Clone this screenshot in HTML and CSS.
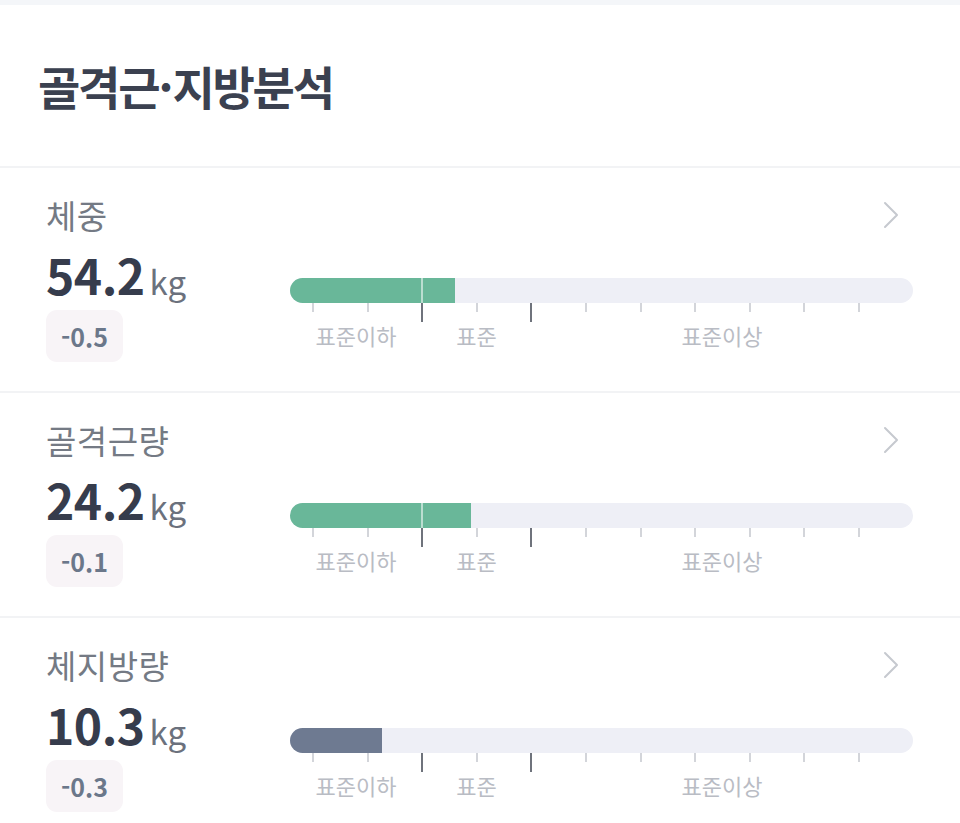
FILE: index.html
```html
<!DOCTYPE html>
<html lang="ko">
<head>
<meta charset="utf-8">
<title>골격근·지방분석</title>
<link rel="stylesheet" href="styles.css">
</head>
<body>
<div class="top-strip"></div>
<header class="header">
  <h1 class="title">골격근<span class="dot">·</span>지방분석</h1>
</header>

<section class="item">
  <div class="item-head">
    <span class="item-label">체중</span>
    <svg class="chevron" viewBox="0 0 16 28" width="16" height="28"><path d="M2 2 L14 14 L2 26" fill="none" stroke="#c6c9cf" stroke-width="2" stroke-linecap="round" stroke-linejoin="round"/></svg>
  </div>
  <div class="item-body">
    <div class="item-main">
      <div class="item-value"><span class="num">54.2</span><span class="unit">kg</span></div>
      <span class="badge">-0.5</span>
    </div>
    <div class="gauge">
      <div class="bar"><div class="fill fill-green" style="width:165px"></div><span class="mark"></span></div>
      <div class="ticks"><i></i><i></i><i class="major"></i><i></i><i class="major"></i><i></i><i></i><i></i><i></i><i></i><i></i></div>
      <div class="gauge-labels"><span>표준이하</span><span>표준</span><span>표준이상</span></div>
    </div>
  </div>
</section>

<section class="item">
  <div class="item-head">
    <span class="item-label">골격근량</span>
    <svg class="chevron" viewBox="0 0 16 28" width="16" height="28"><path d="M2 2 L14 14 L2 26" fill="none" stroke="#c6c9cf" stroke-width="2" stroke-linecap="round" stroke-linejoin="round"/></svg>
  </div>
  <div class="item-body">
    <div class="item-main">
      <div class="item-value"><span class="num">24.2</span><span class="unit">kg</span></div>
      <span class="badge">-0.1</span>
    </div>
    <div class="gauge">
      <div class="bar"><div class="fill fill-green" style="width:181px"></div><span class="mark"></span></div>
      <div class="ticks"><i></i><i></i><i class="major"></i><i></i><i class="major"></i><i></i><i></i><i></i><i></i><i></i><i></i></div>
      <div class="gauge-labels"><span>표준이하</span><span>표준</span><span>표준이상</span></div>
    </div>
  </div>
</section>

<section class="item">
  <div class="item-head">
    <span class="item-label">체지방량</span>
    <svg class="chevron" viewBox="0 0 16 28" width="16" height="28"><path d="M2 2 L14 14 L2 26" fill="none" stroke="#c6c9cf" stroke-width="2" stroke-linecap="round" stroke-linejoin="round"/></svg>
  </div>
  <div class="item-body">
    <div class="item-main">
      <div class="item-value"><span class="num">10.3</span><span class="unit">kg</span></div>
      <span class="badge">-0.3</span>
    </div>
    <div class="gauge">
      <div class="bar"><div class="fill fill-slate" style="width:92px"></div></div>
      <div class="ticks"><i></i><i></i><i class="major"></i><i></i><i class="major"></i><i></i><i></i><i></i><i></i><i></i><i></i></div>
      <div class="gauge-labels"><span>표준이하</span><span>표준</span><span>표준이상</span></div>
    </div>
  </div>
</section>
</body>
</html>
```
FILE: styles.css
```css
* { box-sizing: border-box; }

html, body {
  margin: 0;
  padding: 0;
  background: #ffffff;
}

body {
  font-family: "Noto Sans CJK KR", "Noto Sans", sans-serif;
  color: #3a4050;
}

.top-strip {
  height: 5px;
  background: #f4f6f9;
}

.header {
  padding: 57px 38px 0;
  height: 163px;
  border-bottom: 2px solid #f2f3f5;
}

.title {
  margin: 0;
  font-size: 46px;
  line-height: 46px;
  font-weight: 700;
  letter-spacing: -2.2px;
  color: #3b4150;
}

.title .dot {
  letter-spacing: -1px;
}

.item {
  padding: 31px 47px 29px 46px;
  border-bottom: 2px solid #f2f3f5;
}

.item-head {
  display: flex;
  align-items: center;
  justify-content: space-between;
  height: 32px;
}

.item-label {
  font-size: 33px;
  line-height: 32px;
  color: #747a84;
  letter-spacing: 0.5px;
}

.chevron {
  display: block;
  margin-right: 14px;
}

.item-body {
  display: flex;
  margin-top: 19px;
}

.item-main {
  width: 244px;
  flex: none;
}

.item-value {
  display: flex;
  align-items: baseline;
  height: 48px;
}

.num {
  font-size: 48px;
  line-height: 48px;
  font-weight: 700;
  color: #363c4c;
  letter-spacing: -0.5px;
}

.unit {
  font-size: 33px;
  line-height: 48px;
  color: #6b717d;
  margin-left: 5px;
}

.badge {
  display: inline-flex;
  align-items: center;
  height: 52px;
  margin-top: 12px;
  padding: 0 15px;
  border-radius: 11px;
  background: #f8f4f7;
  color: #6b778a;
  font-size: 25px;
  font-weight: 700;
}

.gauge {
  width: 623px;
  flex: none;
  padding-top: 28px;
}

.bar {
  position: relative;
  height: 25px;
  border-radius: 13px;
  background: #eeeff6;
  overflow: hidden;
}

.fill {
  height: 100%;
}

.fill-green { background: #69b799; }
.fill-slate { background: #6e7a91; }

.mark {
  position: absolute;
  top: 0;
  left: 131px;
  width: 2px;
  height: 100%;
  background: rgba(255, 255, 255, 0.55);
}

.ticks {
  display: flex;
  justify-content: space-between;
  align-items: flex-start;
  width: 548px;
  margin-left: 22px;
  height: 19px;
}

.ticks i {
  display: block;
  width: 2px;
  height: 9px;
  background: #d3d5da;
}

.ticks i.major {
  height: 19px;
  background: #6f737c;
}

.gauge-labels {
  display: grid;
  grid-template-columns: 132px 109px 1fr;
  margin-top: 2px;
  font-size: 22px;
  line-height: 22px;
  color: #b9bcc4;
  text-align: center;
}
```
